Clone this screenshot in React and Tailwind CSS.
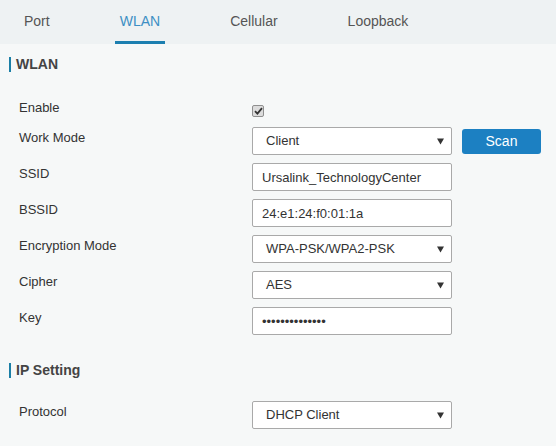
import { useState } from "react";

const font = { fontFamily: '"Liberation Sans", Arial, sans-serif' };

function Caret() {
  return (
    <svg width="7" height="7" viewBox="0 0 7 7" className="shrink-0">
      <path d="M0 0.5 L7 0.5 L3.5 6.5 Z" fill="#333" />
    </svg>
  );
}

function Select({ value }) {
  return (
    <div className="w-[200px] h-[28px] border border-[#a9a9a9] rounded-[2px] bg-white flex items-center justify-between pl-[13px] pr-[7px] text-[13px] text-[#333]">
      <span>{value}</span>
      <Caret />
    </div>
  );
}

function TextInput({ value, type = "text" }) {
  return (
    <input
      type={type}
      value={value}
      readOnly
      className="w-[200px] h-[28px] border border-[#a9a9a9] rounded-[2px] bg-white px-[9px] text-[13px] text-[#333] outline-none"
      style={font}
    />
  );
}

function Row({ label, children }) {
  return (
    <div className="flex items-start mt-[8px]">
      <div className="w-[233px] leading-[18px] mt-[2px] text-[13px] text-[#333]">{label}</div>
      {children}
    </div>
  );
}

function SectionTitle({ title }) {
  return (
    <div className="flex items-center pl-[9px] h-[15px]">
      <div className="w-[2px] h-[15px] bg-[#1b7fa6]" />
      <span className="ml-[5px] text-[14px] font-bold text-[#444] leading-[15px]">{title}</span>
    </div>
  );
}

export default function App() {
  const [tab, setTab] = useState("WLAN");
  const tabs = ["Port", "WLAN", "Cellular", "Loopback"];

  return (
    <div className="w-[556px] h-[446px] bg-[#f6f8f8] overflow-hidden" style={font}>
      <div className="h-[44px] bg-[#eef2f3] flex gap-[60px] pl-[19px]">
        {tabs.map((t) => (
          <button
            key={t}
            onClick={() => setTab(t)}
            className={
              "h-full px-[5px] text-[14px] border-b-[3px] pt-[1px] " +
              (tab === t
                ? "text-[#3d8fc4] border-[#1c7fb0]"
                : "text-[#555] border-transparent")
            }
          >
            {t}
          </button>
        ))}
      </div>

      <div className="pt-[13px]">
        <SectionTitle title="WLAN" />

        <div className="pl-[19px] mt-[25px]">
          <div className="flex items-start h-[22px]">
            <div className="w-[233px] leading-[18px] mt-[2px] text-[13px] text-[#333]">Enable</div>
            <div className="mt-[8px] w-[12px] h-[12px] border border-[#8f8f8f] rounded-[2px] bg-[#dcdcdc] flex items-center justify-center">
              <svg width="9" height="8" viewBox="0 0 9 8">
                <path d="M1 4.2 L3.4 6.6 L8 1.2" stroke="#333" strokeWidth="1.8" fill="none" />
              </svg>
            </div>
          </div>

          <Row label="Work Mode">
            <Select value="Client" />
            <button className="ml-[10px] mt-[2px] w-[79px] h-[25px] rounded-[3px] bg-[#1c80c2] text-white text-[14px]">
              Scan
            </button>
          </Row>
          <Row label="SSID">
            <TextInput value="Ursalink_TechnologyCenter" />
          </Row>
          <Row label="BSSID">
            <TextInput value="24:e1:24:f0:01:1a" />
          </Row>
          <Row label="Encryption Mode">
            <Select value="WPA-PSK/WPA2-PSK" />
          </Row>
          <Row label="Cipher">
            <Select value="AES" />
          </Row>
          <Row label="Key">
            <TextInput type="password" value="12345678901234" />
          </Row>
        </div>

        <div className="mt-[28px]">
          <SectionTitle title="IP Setting" />
        </div>

        <div className="pl-[19px] mt-[23px]">
          <Row label="Protocol">
            <Select value="DHCP Client" />
          </Row>
        </div>
      </div>
    </div>
  );
}
